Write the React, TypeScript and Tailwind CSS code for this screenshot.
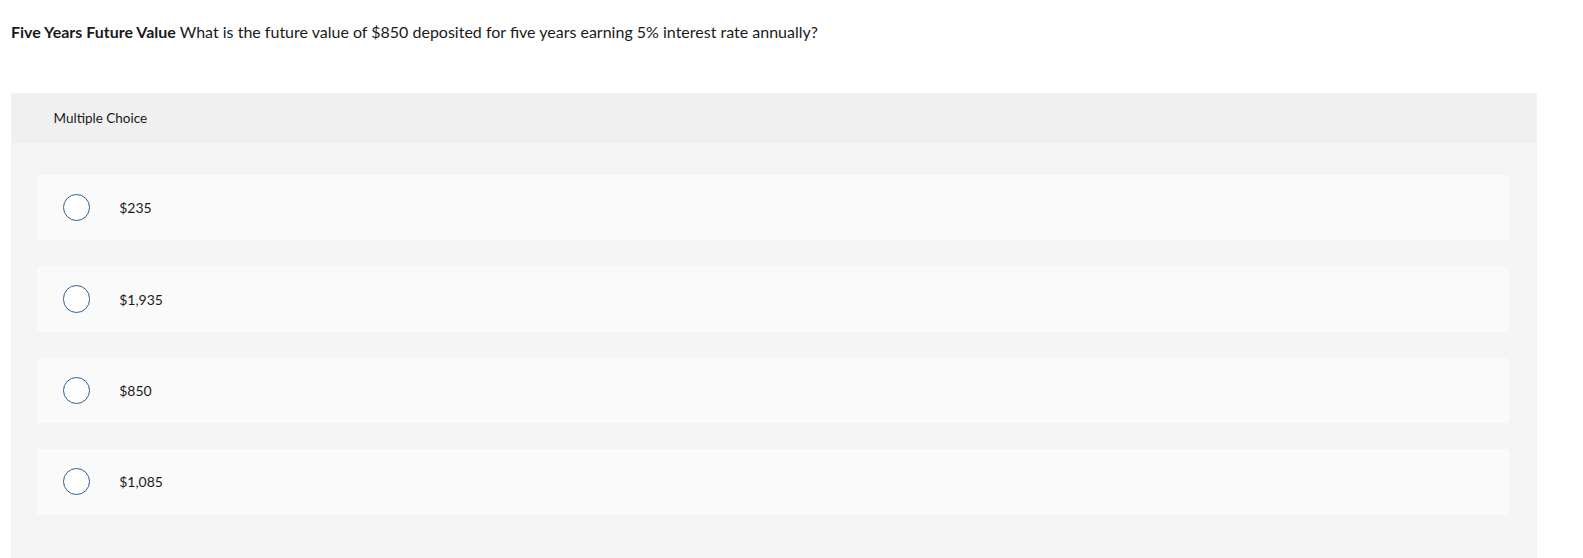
import React from "react";

const options = ["$235", "$1,935", "$850", "$1,085"];

export default function App() {
  return (
    <div className="bg-white h-[558px] overflow-hidden text-[#1a1a1a]" style={{ fontFamily: "Lato, 'Liberation Sans', sans-serif" }}>
      <div className="pl-[11px] pt-[21px] text-[16px] leading-[22px]">
        <span className="font-bold">Five Years Future Value</span>{" "}
        <span>What is the future value of $850 deposited for five years earning 5% interest rate annually?</span>
      </div>
      <div className="ml-[11px] mt-[50px] w-[1526px] rounded-t-[3px] bg-[#f5f5f5] pb-[60px]">
        <div className="h-[49.5px] bg-[#f0f0f0] rounded-t-[3px] flex items-center pl-[42.5px] text-[13.5px]">
          Multiple Choice
        </div>
        <div className="flex flex-col gap-[25.7px] pt-[32.3px] pl-[26.3px] pr-[28.3px]">
          {options.map((o) => (
            <div key={o} className="h-[65.7px] bg-[#fafafa] rounded-[3px] flex items-center">
              <div className="ml-[25.3px] w-[27.3px] h-[27.3px] rounded-full border-[1.5px] border-[#2c5f95] bg-white" />
              <div className="ml-[29.3px] text-[14px]">{o}</div>
            </div>
          ))}
        </div>
      </div>
    </div>
  );
}
